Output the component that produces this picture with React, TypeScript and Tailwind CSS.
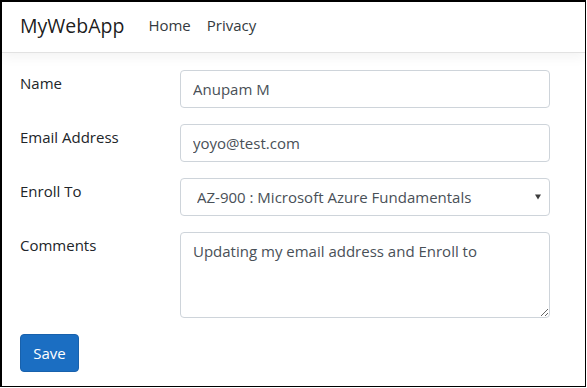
import React from "react";

const font = { fontFamily: '"Open Sans", "Noto Sans", sans-serif' };

function Row({ label, children }: { label: string; children: React.ReactNode }) {
  return (
    <div className="flex mb-4">
      <label className="w-[160px] shrink-0 pt-[1px] leading-6 text-[15px] text-[#212529]">
        {label}
      </label>
      <div className="w-[370px]">{children}</div>
    </div>
  );
}

const inputCls =
  "block w-full h-[38px] px-3 border border-[#ced4da] rounded-[4px] bg-white text-[15px] text-[#495057] leading-6 outline-none";

export default function App() {
  return (
    <div className="bg-white w-[587px] h-[388px]" style={font}>
      <div className="w-[586px] h-[387px] border-l-2 border-t-2 border-r border-b border-black overflow-hidden">
        <nav className="h-[51px] flex items-center pl-[18px] pb-[3px] border-b border-[#e2e2e2] shadow-[0_4px_12px_rgba(0,0,0,0.05)]">
          <span className="text-[19.5px] text-[rgba(0,0,0,0.9)] leading-7">MyWebApp</span>
          <div className="flex ml-[24px] gap-[16px] text-[15px] text-[#343a40]">
            <span>Home</span>
            <span>Privacy</span>
          </div>
        </nav>

        <form className="pl-[18px] pt-[17px]">
          <Row label="Name">
            <input className={inputCls} defaultValue="Anupam M" />
          </Row>
          <Row label="Email Address">
            <input className={inputCls} defaultValue="yoyo@test.com" />
          </Row>
          <Row label="Enroll To">
            <div className="relative">
              <select className={inputCls + " appearance-none pl-4"} defaultValue="az900">
                <option value="az900">AZ-900 : Microsoft Azure Fundamentals</option>
              </select>
              <svg
                className="absolute right-[9px] top-[16px] pointer-events-none"
                width="6"
                height="6"
                viewBox="0 0 6 6"
              >
                <path d="M0 0.5H6L3 5.5Z" fill="#3c3c3c" />
              </svg>
            </div>
          </Row>
          <Row label="Comments">
            <textarea
              className="block w-full h-[86px] px-3 py-[6px] border border-[#ced4da] rounded-[4px] bg-white text-[15px] text-[#495057] leading-6 outline-none"
              defaultValue="Updating my email address and Enroll to"
            />
          </Row>
          <button
            type="button"
            className="h-[38px] w-[59px] rounded-[4px] bg-[#1b6ec2] border border-[#1861ac] text-white text-[15px] leading-6"
          >
            Save
          </button>
        </form>
      </div>
    </div>
  );
}
